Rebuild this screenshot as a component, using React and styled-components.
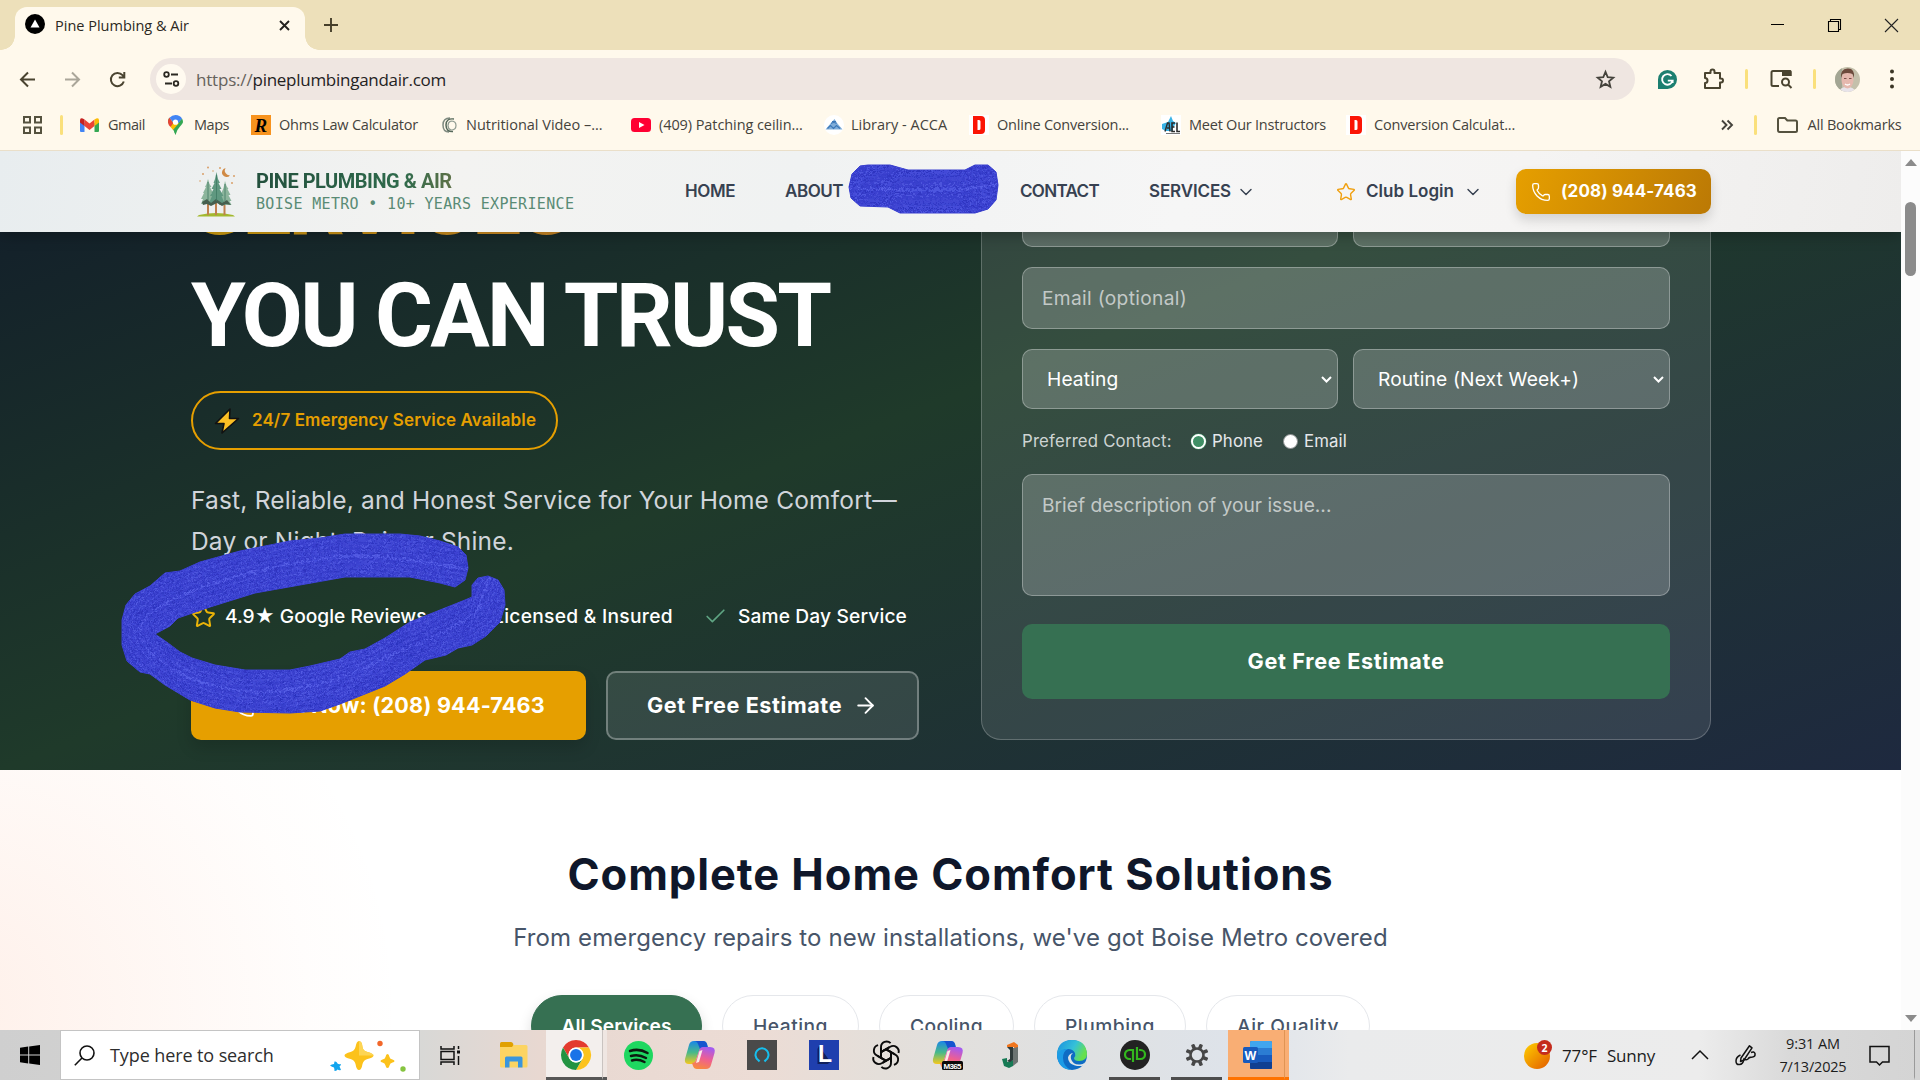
import React from "react";
import styled, { createGlobalStyle, css } from "styled-components";
import { Star, Check, Phone, ArrowRight, ChevronDown } from "lucide-react";

const ui = '"Open Sans", "Noto Sans", sans-serif';
const web = 'Inter, "Liberation Sans", sans-serif';
const display = 'Roboto, "Liberation Sans", sans-serif';
const mono = '"DejaVu Sans Mono", "Liberation Mono", monospace';

const GlobalStyle = createGlobalStyle`
  * { box-sizing: border-box; }
  body { margin: 0; background: #fff; font-family: ${web}; overflow: hidden; }
  svg { display: block; flex: none; overflow: visible; }
`;

const Screen = styled.div`
  width: 1920px;
  height: 1080px;
  display: flex;
  flex-direction: column;
  overflow: hidden;
  position: relative;
`;

const Text = styled.span`
  flex: none;
  white-space: nowrap;
  width: ${(p) => (p.$w ? `${p.$w}px` : "auto")};
  margin-left: ${(p) => p.$ml || 0}px;
  letter-spacing: ${(p) => p.$t || 0}px;
`;

/* ---------- browser chrome ---------- */

const TabStrip = styled.div`
  height: 50px;
  flex: none;
  display: flex;
  align-items: flex-end;
  background: #ede0ba;
  font-family: ${ui};
`;

const Tab = styled.div`
  position: relative;
  width: 290px;
  height: 43px;
  margin-left: 15px;
  padding: 0 15px 7px 10px;
  display: flex;
  align-items: center;
  background: #fff9ec;
  border-radius: 12px 12px 0 0;
  font-size: 14.5px;
  color: #2b2822;
  &::before,
  &::after {
    content: "";
    position: absolute;
    bottom: 0;
    width: 14px;
    height: 14px;
  }
  &::before {
    left: -14px;
    background: radial-gradient(circle at 0 0, transparent 13.5px, #fff9ec 14px);
  }
  &::after {
    right: -14px;
    background: radial-gradient(circle at 100% 0, transparent 13.5px, #fff9ec 14px);
  }
`;

const Favicon = styled.svg`
  margin-top: -2px;
`;

const Spacer = styled.div`
  flex: 1;
`;

const NewTab = styled.div`
  height: 50px;
  padding-left: 19px;
  display: flex;
  align-items: center;
`;

const WindowControls = styled.div`
  height: 50px;
  padding-right: 22px;
  display: flex;
  align-items: center;
  gap: 44px;
`;

const Toolbar = styled.div`
  height: 58px;
  flex: none;
  display: flex;
  align-items: center;
  background: #fff9ec;
  font-family: ${ui};
`;

const NavButtons = styled.div`
  width: 150px;
  padding-left: 19px;
  display: flex;
  align-items: center;
  gap: 28px;
`;

const Omnibox = styled.div`
  width: 1485px;
  height: 42px;
  padding: 0 20px 0 6px;
  display: flex;
  align-items: center;
  border-radius: 21px;
  background: #efe6e1;
  font-size: 17px;
  color: #24221f;
`;

const SiteInfo = styled.div`
  width: 30px;
  height: 30px;
  border-radius: 50%;
  display: grid;
  place-items: center;
  background: #fffaf0;
`;

const Scheme = styled(Text)`
  color: #66625c;
`;

const ToolbarActions = styled.div`
  flex: 1;
  padding-left: 23px;
  display: flex;
  align-items: center;
`;

const Divider = styled.i`
  width: 3px;
  height: 20px;
  border-radius: 2px;
  background: #fae07c;
  flex: none;
  margin-left: ${(p) => p.$ml || 0}px;
`;

const Slot = styled.span`
  display: flex;
  flex: none;
  align-items: center;
  margin-left: ${(p) => p.$ml || 0}px;
`;

const BookmarkBar = styled.div`
  height: 43px;
  flex: none;
  padding: 0 18px 8px 23px;
  display: flex;
  align-items: center;
  background: #fff9ec;
  border-bottom: 1px solid #eadfc9;
  font-family: ${ui};
  font-size: 14.5px;
  color: #45433c;
  ${Text} {
    padding-bottom: 2px;
  }
`;

const Bookmark = styled.div`
  display: flex;
  align-items: center;
  gap: ${(p) => p.$gap}px;
  width: ${(p) => p.$w}px;
  flex: none;
`;

/* ---------- web page ---------- */

const Viewport = styled.div`
  height: 879px;
  flex: none;
  display: flex;
`;

const Page = styled.div`
  width: 1901px;
  overflow: hidden;
`;

const SiteHeader = styled.header`
  position: relative;
  z-index: 1;
  height: 81px;
  padding-left: 196px;
  display: flex;
  align-items: center;
  background: linear-gradient(100deg, #e8edef 0%, #f3f3f1 24%, #f0f2f2 42%, #f6f6f6 62%, #f5f4f3 80%, #eeedec 100%);
  box-shadow: 0 3px 14px rgba(0, 0, 0, 0.28);
  color: #374151;
  font-size: 17px;
  font-weight: 600;
  & > ${Text} {
    padding-bottom: 1px;
  }
`;

const Brand = styled.div`
  width: 489px;
  display: flex;
  gap: 20px;
`;

const BrandText = styled.div`
  display: flex;
  flex-direction: column;
  align-items: flex-start;
  padding-top: 3px;
`;

const BrandName = styled(Text)`
  font: 700 20px/24px ${display};
  background: linear-gradient(90deg, #23503d, #2f6b4c 75%, #5d7148);
  background-clip: text;
  color: transparent;
`;

const BrandTag = styled(Text)`
  font: 400 15px/20px ${mono};
  color: #598b75;
  margin-top: 1px;
`;

const PhoneButton = styled.div`
  width: 195px;
  height: 45px;
  margin-left: 33px;
  padding-left: 15px;
  display: flex;
  align-items: center;
  gap: 10px;
  border-radius: 10px;
  background: linear-gradient(110deg, #e69f00, #bb7905);
  box-shadow: 0 6px 12px rgba(0, 0, 0, 0.14);
  color: #fff;
  font-weight: 700;
  ${Text} {
    padding-bottom: 1px;
  }
`;

const Hero = styled.section`
  height: 538px;
  padding-left: 191px;
  display: grid;
  grid-template-columns: 790px 730px;
  overflow: hidden;
  background: linear-gradient(to bottom right, #0f172a, #1f3a2a 50%, #1e293f) bottom / 100% 745px no-repeat;
  color: #fff;
`;

const Pitch = styled.div`
  display: flex;
  flex-direction: column;
  align-items: flex-start;
`;

const Headline = styled.h1`
  margin: -84px 0 0;
  display: flex;
  flex-direction: column;
  font: 700 88.5px/112px ${display};
`;

const HeadlineAccent = styled(Text)`
  background: linear-gradient(90deg, #dba70f, #c8763a);
  background-clip: text;
  color: transparent;
`;

const EmergencyBadge = styled.div`
  width: 367px;
  height: 59px;
  margin-top: 19px;
  padding-left: 21px;
  display: flex;
  align-items: center;
  gap: 12px;
  border: 2px solid #e69f00;
  border-radius: 30px;
  color: #e69f00;
  font-size: 17px;
  font-weight: 600;
  ${Text} {
    padding-bottom: 1px;
  }
`;

const Lead = styled.p`
  margin: 30px 0 0;
  display: flex;
  flex-direction: column;
  font-size: 24.5px;
  line-height: 41px;
  color: #d1d5db;
`;

const Features = styled.div`
  height: 30px;
  margin-top: 39px;
  display: flex;
  align-items: center;
  font-size: 19.2px;
  font-weight: 500;
`;

const Actions = styled.div`
  margin-top: 40px;
  display: flex;
  gap: 20px;
`;

const ActionButton = styled.div`
  width: ${(p) => p.$w}px;
  height: 69px;
  padding-left: 39px;
  display: flex;
  align-items: center;
  border-radius: 10px;
  font-size: 21.6px;
  font-weight: 700;
  ${Text} {
    padding-bottom: 2px;
  }
  ${(p) =>
    p.$primary
      ? css`
          gap: 10px;
          background: #e69f00;
          box-shadow: 0 8px 16px rgba(0, 0, 0, 0.14);
        `
      : css`
          gap: 11px;
          background: rgba(255, 255, 255, 0.1);
          border: 2px solid rgba(255, 255, 255, 0.3);
        `}
`;

const EstimateCard = styled.div`
  height: 568px;
  margin-top: -60px;
  padding: 12px 40px 40px;
  display: flex;
  flex-direction: column;
  border: 1px solid rgba(255, 255, 255, 0.22);
  border-radius: 20px;
  background: rgba(255, 255, 255, 0.1);
  font-size: 19.2px;
`;

const FieldRow = styled.div`
  display: grid;
  grid-template-columns: 316px 317px;
  gap: 15px;
  margin-bottom: 20px;
`;

const Field = styled.div`
  height: ${(p) => p.$h || 62}px;
  padding: ${(p) => p.$pad || "0 19px"};
  margin-bottom: ${(p) => p.$mb || 0}px;
  display: flex;
  align-items: ${(p) => (p.$top ? "flex-start" : "center")};
  justify-content: space-between;
  border: 1px solid rgba(255, 255, 255, 0.3);
  border-radius: 10px;
  background: rgba(255, 255, 255, 0.2);
  color: ${(p) => (p.$muted ? "#c3c9c7" : "#fff")};
`;

const ContactRow = styled.div`
  height: 25px;
  margin-bottom: 20px;
  display: flex;
  align-items: center;
  font-size: 16.8px;
  color: #e5e7eb;
  ${Text} {
    padding-bottom: 2px;
  }
`;

const ContactLabel = styled(Text)`
  color: #ced4d3;
`;

const Radio = styled.i`
  width: 15px;
  height: 15px;
  flex: none;
  margin-left: ${(p) => p.$ml}px;
  border-radius: 50%;
  ${(p) =>
    p.$on
      ? css`
          background: #3f8f65;
          border: 2px solid #fff;
          box-shadow: inset 0 0 0 0.5px #3f8f65, 0 0 0 0.5px #3f8f65;
        `
      : css`
          background: #fff;
          border: 1px solid #8a8f8f;
        `}
`;

const SubmitButton = styled.div`
  height: 75px;
  display: grid;
  place-items: center;
  border-radius: 10px;
  background: #367052;
  font-size: 21.6px;
  font-weight: 700;
  ${Text} {
    padding-bottom: 2px;
  }
`;

const Services = styled.section`
  height: 260px;
  padding-top: 77px;
  display: flex;
  flex-direction: column;
  align-items: center;
  overflow: hidden;
  background: radial-gradient(circle 440px at -40px 240px, rgba(250, 140, 90, 0.13), rgba(250, 145, 95, 0.09) 30%, rgba(250, 160, 110, 0.02) 80%, rgba(250, 160, 110, 0) 100%), #fff;
`;

const SectionTitle = styled.h2`
  margin: 0;
  font-size: 43.5px;
  line-height: 54px;
  font-weight: 700;
  color: #0f172a;
`;

const SectionLead = styled.p`
  margin: 19px 0 39px;
  font-size: 24px;
  line-height: 36px;
  color: #475569;
`;

const Pills = styled.div`
  display: flex;
  gap: 20px;
`;

const Pill = styled.div`
  width: ${(p) => p.$w}px;
  height: 62px;
  flex: none;
  display: grid;
  place-items: center;
  border-radius: 31px;
  font-size: 19.2px;
  font-weight: 500;
  color: #475569;
  background: #fff;
  border: 1px solid #e5e7eb;
  ${(p) =>
    p.$active &&
    css`
      background: #367052;
      border-color: #367052;
      color: #fff;
      font-weight: 600;
      box-shadow: 0 6px 14px rgba(0, 0, 0, 0.14);
    `}
`;

const Scrollbar = styled.div`
  width: 19px;
  padding: 8px 0 8px;
  display: flex;
  flex-direction: column;
  align-items: center;
  background: #fcfcfc;
`;

const Arrow = styled.i`
  width: 0;
  height: 0;
  border: 6.5px solid transparent;
  ${(p) =>
    p.$down
      ? "border-top: 7px solid #8b8b8b; border-bottom: 0;"
      : "border-bottom: 7px solid #8b8b8b; border-top: 0;"}
`;

const Thumb = styled.div`
  width: 11px;
  height: 74px;
  margin: 36px 0 auto;
  border-radius: 6px;
  background: #8b8b8b;
`;

/* ---------- taskbar ---------- */

const Taskbar = styled.div`
  height: 50px;
  flex: none;
  display: flex;
  align-items: center;
  font-family: ${ui};
  color: #1c1c1c;
  background: linear-gradient(90deg, #cfcfcf 0, #d8d8d6 420px, #e8d8d1 540px, #ecdcd5 760px, #e4dfda 880px, #dfe1e2 1080px, #dee3ea 1240px, #eaebec 1350px, #ececec 1700px, #d9d9d9 1790px, #d4d4d4 1920px);
`;

const SearchBox = styled.div`
  width: 360px;
  height: 50px;
  margin-left: 20px;
  padding-left: 13px;
  display: flex;
  align-items: center;
  background: #fff;
  border: 1px solid #c4c4c4;
  font-size: 18px;
  color: #2d2d2d;
`;

const AppTile = styled.div`
  width: ${(p) => p.$w || 61}px;
  height: 50px;
  flex: none;
  display: grid;
  place-items: center;
  margin-left: ${(p) => p.$ml || 0}px;
  background: ${(p) => p.$bg || "transparent"};
  border-bottom: 3px solid ${(p) => p.$line || "transparent"};
  border-right: ${(p) => (p.$edge ? `1px solid ${p.$edge}` : "0")};
  padding: 3px 0 0 ${(p) => p.$pl || 0}px;
`;

const Clock = styled.div`
  width: 68px;
  margin-left: 23px;
  display: flex;
  flex-direction: column;
  align-items: center;
  font-size: 14.5px;
  line-height: 23px;
`;

const Weather = styled.div`
  display: flex;
  align-items: center;
  font-size: 17px;
`;

const Ink = styled.svg`
  position: absolute;
  left: 0;
  top: 0;
  z-index: 5;
  pointer-events: none;
`;

/* ---------- drawings ---------- */

const Svg = ({ w, h = w, vb, children, ...rest }) => (
  <svg width={w} height={h} viewBox={vb || `0 0 ${w} ${h}`} fill="none" {...rest}>
    {children}
  </svg>
);

const SelectArrow = () => (
  <Svg w={11} h={7}>
    <path d="M1 1l4.5 4.5L10 1" stroke="#fff" strokeWidth="2" />
  </Svg>
);

const DLogo = () => (
  <Svg w={20}>
    <rect width="20" height="20" fill="#fff" />
    <path fillRule="evenodd" d="M4 1h8q4 0 4 4v10q0 4-4 4H4zM8.500 5v10h1.500q1.500 0 1.500-1.500v-7Q11.500 5 10 5z" fill="#fb1505" />
  </Svg>
);

const PineLogo = () => (
  <Svg w={40} h={51}>
    <path d="M3 49q17-4 34 0l2 1.500H1z" fill="#a3b92f" />
    <path d="M12 35v14M20 34v15M28.500 36v13" stroke="#c0814e" strokeWidth="2" />
    <g fill="#8cb59c">
      <path d="M12 13l1.500 5 2 3-1.500 0 3 6-2 0 3 6-2 0 2 5H5l2-5H5l3-6H7l3-6H9l1.500-3z" />
      <path d="M29 15l1.500 5 2 3-1 0 3 6-2 0 3 6-2 0 2 4H23l1-5-1 0 3-6-1 0 2.500-6z" />
    </g>
    <path d="M20.500 6l1.500 7 2 4-1.500 0 3 6-2 0 4 7-2 0 3 7H13l3-7-2 0 3.500-7-2 0 3-6-1 0 1.500-4z" fill="#5f9880" />
    <path d="M6 36l5-3 4 4 5-4 6 4 5-3 4 5-5-1-4 2-5-3-6 3-4-2-4 1z" fill="#46604f" />
    <path d="M20.500 9v26M12 16v18M29 18v17" stroke="#3f7a63" strokeWidth=".8" />
    <path d="M29.500 2a4.600 4.600 0 1 0 4.500 7.500 5 5 0 0 1-4.500-7.500" fill="#d08a45" />
    <g fill="#d9a06a">
      <circle cx="12" cy="1.500" r="1" />
      <circle cx="24" cy="2" r="1" />
      <circle cx="7" cy="8" r="1" />
      <circle cx="17" cy="5" r=".8" />
      <circle cx="38" cy="10" r="1" />
      <circle cx="4" cy="15" r=".8" />
      <circle cx="36" cy="17" r="1" />
    </g>
  </Svg>
);

const Copilot = ({ badge }) => (
  <Svg w={30}>
    <defs>
      <linearGradient id="cpA" x1="0" y1="0" x2="0" y2="1">
        <stop offset="0" stopColor="#1a86e8" />
        <stop offset=".5" stopColor="#48b98a" />
        <stop offset="1" stopColor="#f6c81c" />
      </linearGradient>
      <linearGradient id="cpB" x1=".6" y1="0" x2=".3" y2="1">
        <stop offset="0" stopColor="#a45bf0" />
        <stop offset=".5" stopColor="#ee5f92" />
        <stop offset="1" stopColor="#f98a3c" />
      </linearGradient>
    </defs>
    <path d="M9 1h9q3 0 4 3l1 4h-5q-3 0-4 3l-3 9q-1 4-4 4H4q-5 0-4-5L4 5q1-4 5-4" fill="url(#cpA)" />
    <path d="M9 1h9q3 0 4 3l1 4h-5l-3 1-2-5q-1-3-4-3" fill="#1554cf" />
    <path d="M21 29h-9q-3 0-4-3l-1-3q3 0 4-3l3-9q1-4 4-4h7q6 0 4.500 6L26 25q-1 4-5 4" fill="url(#cpB)" />
    <path d="M14.500 11l3-1-3.500 12-3 1z" fill="#fbe9e6" />
    {badge && (
      <>
        <rect x="9" y="21" width="21" height="9" rx="1.500" fill="#0a0a0a" />
        <text x="10.500" y="28.500" fontFamily="Liberation Sans" fontWeight="700" fontSize="8" fill="#fff" textLength="18">
          M365
        </text>
      </>
    )}
  </Svg>
);

const Chrome = () => (
  <Svg w={30} vb="0 0 48 48">
    <circle cx="24" cy="24" r="24" fill="#fff" />
    <path d="M24 12h20.800A24 24 0 0 0 3.220 12l10.390 18A12 12 0 0 1 24 12" fill="#e33b2e" />
    <path d="M34.390 30L24 48A24 24 0 0 0 44.800 12H24a12 12 0 0 1 10.390 18" fill="#fcc31e" />
    <path d="M13.610 30L3.220 12A24 24 0 0 0 24 48l10.390-18a12 12 0 0 1-20.780 0" fill="#229342" />
    <circle cx="24" cy="24" r="12" fill="#fff" />
    <circle cx="24" cy="24" r="9.500" fill="#1a73e8" />
  </Svg>
);

const SCRIBBLE_A =
  "M849 187L852 174L860 166L868 165H890L908 170H965L975 165H988L996 172L998 185L996 200L988 209L975 213H900L888 207L860 206L851 198Z";
const SCRIBBLE_B =
  "M345 534H400L420 536L440 541L458 547L466 555L468 568L465 580L455 587L440 583L425 580L410 577H345L300 585L255 593L210 607L178 618L170 626L155 634L168 643L180 652L192 658L215 665L245 670H290L310 666L340 659L350 652L365 649L385 638L410 622L440 610L465 600L472 597V585L478 578L488 576L498 580L504 590L505 605L500 622L486 636L472 645L458 648L446 655L425 660L405 674L385 686L340 704L320 711L290 713L240 712L215 708L190 700L165 685L150 674L140 672L127 661L122 645L122 620L126 605L135 594L150 586L165 573L180 571L200 562L240 551L290 541L320 538Z";
const STROKE_A = "M840 188L905 190L960 190L1010 182";
const STROKE_B =
  "M490 574Q400 555 345 556Q260 565 190 592Q138 612 140 634Q143 652 178 672Q210 690 260 692Q330 690 390 655Q450 632 477 612L492 570";

const INK = ["#3b41d0", "#2b31bb", "#474fdd", "#373dcb", "#575fe6", "#3036c2", "#4148d6"];
const WIDTHS = Array.from({ length: 40 }, (_, i) => 60 - i * 1.5);

const Streaks = ({ d, clip }) => (
  <g clipPath={`url(#${clip})`}>
    <g fill="none" filter="url(#rough)">
      {WIDTHS.map((w, i) => (
        <path key={w} d={d} strokeWidth={w} stroke={INK[i % INK.length]} strokeLinejoin="round" />
      ))}
    </g>
  </g>
);

const Scribbles = () => (
  <Ink width="1920" height="1080" viewBox="0 0 1920 1080">
    <defs>
      <clipPath id="inkA"><path d={SCRIBBLE_A} /></clipPath>
      <clipPath id="inkB"><path d={SCRIBBLE_B} /></clipPath>
      <filter id="rough" filterUnits="userSpaceOnUse" x="80" y="140" width="960" height="600">
        <feTurbulence type="fractalNoise" baseFrequency="0.3" numOctaves="3" seed="4" result="n" />
        <feDisplacementMap in="SourceGraphic" in2="n" scale="9" xChannelSelector="R" yChannelSelector="G" />
      </filter>
    </defs>
    <path d={SCRIBBLE_A} fill="#3a40cf" stroke="#3a40cf" strokeLinejoin="round" />
    <Streaks d={STROKE_A} clip="inkA" />
    <path d={SCRIBBLE_B} fill="#3a40cf" stroke="#3a40cf" strokeLinejoin="round" />
    <Streaks d={STROKE_B} clip="inkB" />
  </Ink>
);

/* ---------- sections ---------- */

const BrowserTop = () => (
  <>
    <TabStrip>
      <Tab>
        <Favicon width="20" height="20" viewBox="0 0 20 20">
          <circle cx="10" cy="10" r="10" fill="#000" />
          <path d="M10 5.500L14.500 13.500h-9z" fill="#fff" />
        </Favicon>
        <Text $ml={10} $w={134}>Pine Plumbing &amp; Air</Text>
        <Spacer />
        <Svg w={11}>
          <path d="M1 1l9 9M10 1l-9 9" stroke="#24221f" strokeWidth="1.900" />
        </Svg>
      </Tab>
      <NewTab>
        <Svg w={14}>
          <path d="M7 0v14M0 7h14" stroke="#463f2a" strokeWidth="1.900" />
        </Svg>
      </NewTab>
      <Spacer />
      <WindowControls>
        <Svg w={13}><path d="M0 5.500h13" stroke="#000" /></Svg>
        <Svg w={13}><path d="M.5 2.500h10v10h-10zM2.500 2.500v-2h10v10h-2" stroke="#000" strokeWidth="1.100" /></Svg>
        <Svg w={13}><path d="M0 0l13 13M13 0L0 13" stroke="#222" strokeWidth="1.100" /></Svg>
      </WindowControls>
    </TabStrip>

    <Toolbar>
      <NavButtons>
        <Svg w={17}><path d="M16 8.500H2M9 1.500l-7 7 7 7" stroke="#4a4430" strokeWidth="2" /></Svg>
        <Svg w={17}><path d="M1 8.500h14M8 1.500l7 7-7 7" stroke="#aaa699" strokeWidth="2" /></Svg>
        <Svg w={17}>
          <path d="M14.800 10.500A6.600 6.600 0 1 1 13.500 4.200L15 5.800M15.300 1v5.500H9.800" stroke="#4a4430" strokeWidth="2" />
        </Svg>
      </NavButtons>
      <Omnibox>
        <SiteInfo>
          <Svg w={17} h={16}>
            <path d="M8 3.500h7M2 12.500h7" stroke="#2b2822" strokeWidth="2" />
            <circle cx="3.500" cy="3.500" r="2.300" stroke="#2b2822" strokeWidth="1.800" />
            <circle cx="13" cy="12.500" r="2.300" stroke="#2b2822" strokeWidth="1.800" />
          </Svg>
        </SiteInfo>
        <Scheme $ml={10} $w={56.5} $t={-0.19}>https://</Scheme>
        <Text $t={-0.27}>pineplumbingandair.com</Text>
        <Spacer />
        <Svg w={19} vb="0 0 20 20">
          <path d="M10 2l2.300 5.500 5.900.5-4.500 3.900 1.400 5.800L10 14.600l-5.100 3.100 1.400-5.800L1.800 8l5.900-.5z" stroke="#45433c" strokeWidth="1.900" />
        </Svg>
      </Omnibox>
      <ToolbarActions>
        <Svg w={19}>
          <path d="M9.500 0a9.500 9.500 0 1 1 0 19H0V9.500A9.500 9.500 0 0 1 9.500 0" fill="#1c7f70" />
          <path d="M13.500 6A5.300 5.300 0 1 0 14.600 10.600H9.800M14.600 10.600V13" stroke="#fff" strokeWidth="1.900" />
        </Svg>
        <Slot $ml={26}>
          <Svg w={22}>
            <path d="M2 5h5.500V3.500a2 2 0 0 1 4 0V5H17v5.500h1a2 2 0 0 1 0 4h-1V20H2v-5a2.500 2.500 0 0 0 0-5z" stroke="#4a4430" strokeWidth="2" strokeLinejoin="round" />
          </Svg>
        </Slot>
        <Divider $ml={20} />
        <Slot $ml={22}>
          <Svg w={22} h={20}>
            <path d="M9 17H3q-1.500 0-1.500-1.500v-12Q1.500 2 3 2h16.500q1 0 1 1v4" stroke="#4a4430" strokeWidth="2" />
            <path d="M12 1h8q1.500 0 1.500 1.500V7H12z" fill="#4a4430" />
            <circle cx="15.500" cy="13" r="3.500" stroke="#4a4430" strokeWidth="2" />
            <path d="M18 15.500l3.500 3.500" stroke="#4a4430" strokeWidth="2" />
          </Svg>
        </Slot>
        <Divider $ml={21} />
        <Slot $ml={19}>
          <Svg w={25}>
            <clipPath id="face"><circle cx="12.500" cy="12.500" r="12.500" /></clipPath>
            <g clipPath="url(#face)">
              <rect width="25" height="25" fill="#c4c0ab" />
              <rect width="7" height="25" fill="#a3a694" />
              <path d="M4 25q1-5 8-5t9 5" fill="#e8e4ea" />
              <ellipse cx="12.500" cy="13" rx="6" ry="8.500" fill="#e5b8ae" />
              <path d="M6 11q-1-9 6.500-9.500T19 11l-1.500-4q-5-2-10 0z" fill="#6d4a3c" />
              <path d="M9 11.500h2.500M14 11.500h2.500" stroke="#7c5048" strokeWidth="1.200" />
              <path d="M10 17q2.500 2 5 0" stroke="#fff" strokeWidth="1.300" />
            </g>
          </Svg>
        </Slot>
        <Slot $ml={30}>
          <Svg w={4} h={20}>
            <g fill="#3b3625">
              <circle cx="2" cy="2.500" r="2" />
              <circle cx="2" cy="10" r="2" />
              <circle cx="2" cy="17.500" r="2" />
            </g>
          </Svg>
        </Slot>
      </ToolbarActions>
    </Toolbar>

    <BookmarkBar>
      <Svg w={19} h={18}>
        <path d="M1 1h6v5.500H1zM12 1h6v5.500h-6zM1 11.500h6V17H1zM12 11.500h6V17h-6z" stroke="#55523f" strokeWidth="2" />
      </Svg>
      <Divider $ml={18} />
      <Slot $ml={17}>
        <Bookmark $gap={9} $w={88}>
          <Svg w={19} h={14}>
            <path d="M0 2v11q0 1 1 1h3.500V5z" fill="#4285f4" />
            <path d="M19 2v11q0 1-1 1h-3.500V5z" fill="#34a853" />
            <path d="M4.500 8V1.500l5 4 5-4V8l-5 4z" fill="#ea4335" />
            <path d="M14.500 8V1.500Q19-1.500 19 2.500v2z" fill="#fbbc04" />
            <path d="M4.500 8V1.500Q0-1.500 0 2.500v2z" fill="#c5221f" />
          </Svg>
          <Text $t={-0.47}>Gmail</Text>
        </Bookmark>
        <Bookmark $gap={11} $w={83}>
          <Svg w={15} h={20}>
            <path d="M7.500 20Q6.500 15 3 11.500 0 8 0 7q0-2 1-4l5 5z" fill="#34a853" />
            <path d="M7.500 20q1-5 4.500-8.500Q15 8 15 7q0-2-1-3.500L4.500 13.500Q6.500 16 7.500 20" fill="#34a853" />
            <path d="M0 7q0 2.500 2.500 5l3-3.500-4-6Q0 4.500 0 7" fill="#ea4335" />
            <path d="M2.500 12q1.500 1.500 2.500 3l6-7-5-1z" fill="#fbbc04" />
            <path d="M1.500 2.700Q4 0 7.500 0 12 0 14 3.500L10.500 8 5 7z" fill="#4285f4" />
            <circle cx="7.500" cy="7.200" r="2.600" fill="#fff" />
          </Svg>
          <Text $t={-0.47}>Maps</Text>
        </Bookmark>
        <Bookmark $gap={8} $w={191}>
          <Svg w={20}>
            <rect width="20" height="20" fill="#f7931e" />
            <text x="3.500" y="16.500" fontFamily="Liberation Serif" fontStyle="italic" fontWeight="700" fontSize="19" fill="#000">R</text>
          </Svg>
          <Text $t={-0.22}>Ohms Law Calculator</Text>
        </Bookmark>
        <Bookmark $gap={9} $w={189}>
          <Svg w={15} h={16}>
            <path d="M8 1Q1 1 1 8t6 7" stroke="#7f8a80" strokeWidth="1.500" />
            <path d="M12 2Q4 1 4 8t7 6.500" stroke="#55685a" strokeWidth="1.500" />
            <path d="M9 4q5 0 5 4.500T9 13Q6 12 6 8.500T9 4" stroke="#8e9a90" strokeWidth="1.200" />
          </Svg>
          <Text $t={-0.02}>Nutritional Video –...</Text>
        </Bookmark>
        <Bookmark $gap={8} $w={193}>
          <Svg w={20} h={14}>
            <rect width="20" height="14" rx="3.500" fill="#ff0033" />
            <path d="M8 4v6l5.500-3z" fill="#fff" />
          </Svg>
          <Text $t={-0.08}>(409) Patching ceilin...</Text>
        </Bookmark>
        <Bookmark $gap={7} $w={145}>
          <Svg w={20}>
            <circle cx="10" cy="10" r="10" fill="#fff" />
            <path d="M10.500 4l2.500 4 5.500 6.500H1.500L7 8z" fill="#7fadd9" />
            <path d="M3.500 13.500l3-3 3 3 3-3 3.500 3M7 8.500q3-2 5.500 0M8 6.500h4" stroke="#3c78b8" strokeWidth="1.200" />
          </Svg>
          <Text>Library - ACCA</Text>
        </Bookmark>
        <Bookmark $gap={8} $w={192}>
          <DLogo />
          <Text $t={-0.2}>Online Conversion...</Text>
        </Bookmark>
        <Bookmark $gap={8} $w={185}>
          <Svg w={20}>
            <rect width="20" height="20" fill="#fff" />
            <path d="M10 1l2 5 3 2-3 5v3H5l-4-2V9l6-2z" fill="#39b3e6" />
            <path d="M4 16.500L6.500 8H8l1 8.500M6 13h3" stroke="#2b2b2b" strokeWidth="1.400" />
            <path d="M14 8h-3v8.500h3M11 12h2.500M16 7.500v9h3" stroke="#2b2b2b" strokeWidth="1.600" />
            <path d="M5 18.500h14" stroke="#777" />
          </Svg>
          <Text $t={-0.23}>Meet Our Instructors</Text>
        </Bookmark>
        <Bookmark $gap={8} $w={175}>
          <DLogo />
          <Text $t={-0.18}>Conversion Calculat...</Text>
        </Bookmark>
      </Slot>
      <Spacer />
      <Svg w={12} h={10}>
        <path d="M1 .5L5.500 5 1 9.500M6.500.5L11 5 6.500 9.500" stroke="#45433c" strokeWidth="1.900" />
      </Svg>
      <Divider $ml={21} />
      <Slot $ml={20}>
        <Svg w={21} h={16}>
          <path d="M1 13V2.500Q1 1 2.500 1H8l2.300 2.500h8.200Q20 3.500 20 5v8.500q0 1.500-1.500 1.500h-16Q1 15 1 13z" stroke="#55523f" strokeWidth="2" />
        </Svg>
        <Text $ml={10} $t={-0.2} $w={94.500}>All Bookmarks</Text>
      </Slot>
    </BookmarkBar>
  </>
);

const Header = () => (
  <SiteHeader>
    <Brand>
      <PineLogo />
      <BrandText>
        <BrandName $t={-0.48}>PINE PLUMBING &amp; AIR</BrandName>
        <BrandTag $t={0.33}>BOISE METRO • 10+ YEARS EXPERIENCE</BrandTag>
      </BrandText>
    </Brand>
    <Text $w={50} $t={-0.43}>HOME</Text>
    <Text $ml={50} $w={59} $t={-0.47}>ABOUT</Text>
    <Text $ml={176} $w={79} $t={-0.67}>CONTACT</Text>
    <Text $ml={50} $w={82} $t={-0.13}>SERVICES</Text>
    <Slot $ml={5}><ChevronDown size={20} strokeWidth={1.7} /></Slot>
    <Slot $ml={80}><Star size={20} strokeWidth={1.7} color="#f0a010" /></Slot>
    <Text $ml={10} $w={88} $t={0.03}>Club Login</Text>
    <Slot $ml={9}><ChevronDown size={20} strokeWidth={1.7} /></Slot>
    <PhoneButton>
      <Phone size={20} strokeWidth={1.6} />
      <Text $t={0.14}>(208) 944-7463</Text>
    </PhoneButton>
  </SiteHeader>
);

const HeroSection = () => (
  <Hero>
    <Pitch>
      <Headline>
        <HeadlineAccent $t={-3.5}>SERVICES</HeadlineAccent>
        <Text $t={-2.7}>YOU CAN TRUST</Text>
      </Headline>
      <EmergencyBadge>
        <Svg w={26} h={26}>
          <path d="M16 1L1.500 15.500h8.500L8 25 24.500 10.500h-9z" fill="#fbbf24" stroke="#111" strokeWidth="1.600" strokeLinejoin="round" />
        </Svg>
        <Text $t={0.11}>24/7 Emergency Service Available</Text>
      </EmergencyBadge>
      <Lead>
        <Text $t={0.19}>Fast, Reliable, and Honest Service for Your Home Comfort—</Text>
        <Text $t={0.18}>Day or Night, Rain or Shine.</Text>
      </Lead>
      <Features>
        <Star size={25} strokeWidth={1.9} color="#eab308" />
        <Text $ml={9} $w={201}>4.9★ Google Reviews</Text>
        <Slot $ml={27}><Check size={25} strokeWidth={1.6} color="#5fa583" /></Slot>
        <Text $ml={15} $w={180} $t={0.29}>Licensed &amp; Insured</Text>
        <Slot $ml={30}><Check size={25} strokeWidth={1.6} color="#5fa583" /></Slot>
        <Text $ml={10} $w={169} $t={0.13}>Same Day Service</Text>
      </Features>
      <Actions>
        <ActionButton $w={395} $primary>
          <Phone size={25} strokeWidth={1.7} />
          <Text $t={0.18}>Call Now: (208) 944-7463</Text>
        </ActionButton>
        <ActionButton $w={313}>
          <Text $t={0.58}>Get Free Estimate</Text>
          <ArrowRight size={25} strokeWidth={1.8} />
        </ActionButton>
      </Actions>
    </Pitch>

    <EstimateCard>
      <FieldRow>
        <Field />
        <Field />
      </FieldRow>
      <Field $muted $mb={20}>
        <Text $t={0.31}>Email (optional)</Text>
      </Field>
      <FieldRow>
        <Field $h={60} $pad="0 5px 0 24px">
          <Text $t={0.12}>Heating</Text>
          <SelectArrow />
        </Field>
        <Field $h={60} $pad="0 5px 0 24px">
          <Text $t={0.15}>Routine (Next Week+)</Text>
          <SelectArrow />
        </Field>
      </FieldRow>
      <ContactRow>
        <ContactLabel $w={149} $t={0.17}>Preferred Contact:</ContactLabel>
        <Radio $on $ml={20} />
        <Text $ml={6} $w={51} $t={0.12}>Phone</Text>
        <Radio $ml={20} />
        <Text $ml={6} $t={0.13}>Email</Text>
      </ContactRow>
      <Field $h={122} $muted $top $pad="18px 19px" $mb={28}>
        <Text>Brief description of your issue...</Text>
      </Field>
      <SubmitButton>
        <Text $t={0.69}>Get Free Estimate</Text>
      </SubmitButton>
    </EstimateCard>
  </Hero>
);

const ServicesSection = () => (
  <Services>
    <SectionTitle><Text $t={0.95}>Complete Home Comfort Solutions</Text></SectionTitle>
    <SectionLead><Text $t={0.11}>From emergency repairs to new installations, we've got Boise Metro covered</Text></SectionLead>
    <Pills>
      <Pill $w={171} $active><Text>All Services</Text></Pill>
      <Pill $w={137}><Text $t={0.5}>Heating</Text></Pill>
      <Pill $w={135}><Text $t={0.38}>Cooling</Text></Pill>
      <Pill $w={152}><Text $t={0.52}>Plumbing</Text></Pill>
      <Pill $w={164}><Text $t={0.56}>Air Quality</Text></Pill>
    </Pills>
  </Services>
);

const WindowsTaskbar = () => (
  <Taskbar>
    <Slot $ml={20}>
      <Svg w={20}>
        <path d="M0 2.800l8.200-1.200v8H0zM9.200 1.500L20 0v9.600H9.200zM0 10.500h8.200v8L0 17.200zM9.200 10.500H20V20L9.200 18.600z" fill="#000" />
      </Svg>
    </Slot>
    <SearchBox>
      <Svg w={21}>
        <circle cx="13" cy="8" r="7" stroke="#111" strokeWidth="1.600" />
        <path d="M8 13L.8 20.200" stroke="#111" strokeWidth="1.600" />
      </Svg>
      <Text $ml={15} $w={163} $t={-0.1}>Type here to search</Text>
      <Slot $ml={57}>
        <Svg w={78} h={32}>
          <path d="M4.500 22.500q2-.5 3 2 1 1 3.500.500-.5 2-1.500 2.500 1 2 1.500 3.500-2 .5-3.500-.5-1 1.500-3 1.500 0-2-.5-3.500Q2 28 0 26.500q1.500-1.500 4-1.500z" fill="#12a5ee" />
          <path d="M29 2q3 0 3.500 6 .5 4 5 5 6 1.500 6 3.500t-6 3.500q-4 1-5 5-1 6-3.500 6t-3.500-6q-1-4-5-5-6-1.500-6-3.500t6-3.500q4-1 5-5Q26.500 2 29 2" fill="#fcc21b" />
          <path d="M29 2q3 0 3.500 6 .5 4 5 5 6 1.500 6 3.500H29z" fill="#fdd554" />
          <circle cx="50" cy="4.500" r="2.700" fill="#f2672a" />
          <path d="M57.500 15q1.500 0 2 3 .5 2 3 2.500 2 .5 2 1.500t-2 1.500q-2.500.5-3 3-.5 2.500-2 2.500t-2-2.500q-.5-2.500-3-3-2-.5-2-1.500t2-1.500q2.500-.5 3-2.500.5-3 2-3" fill="#fcc21b" />
          <circle cx="73" cy="30" r="2.700" fill="#86c440" />
        </Svg>
      </Slot>
    </SearchBox>
    <AppTile $w={60}>
      <Svg w={21}>
        <path d="M1 1v3h13V1M1 20v-3h13v3M1 6.500h13v8H1zM18.500 1v3M18.500 11v9" stroke="#111" strokeWidth="1.500" />
        <rect x="17" y="5.500" width="3" height="3" fill="#111" />
      </Svg>
    </AppTile>
    <AppTile $w={66} $pl={2}>
      <Svg w={28} h={26}>
        <path d="M0 1.500Q0 0 1.500 0H11q1.500 0 2 1.500L14 5H0z" fill="#e0a000" />
        <path d="M0 5h12l1.500-2H26q1.500 0 1.500 1.500V24q0 1.500-1.500 1.500H1.500Q0 25.500 0 24z" fill="#fcd462" />
        <path d="M5 25.500V16q0-1.500 1.500-1.500H21q1.500 0 1.500 1.500v9.500H18V19.500H9.500v6z" fill="#3a96dd" />
      </Svg>
    </AppTile>
    <AppTile $w={57} $pl={3} $bg="#f3efed" $line="#575757" $edge="#c9c3c0">
      <Chrome />
    </AppTile>
    <AppTile $w={4} $bg="#efe6e2" $line="#575757" />
    <AppTile $w={61} $ml={1}>
      <Svg w={29}>
        <circle cx="14.500" cy="14.500" r="14.500" fill="#1ed760" />
        <path d="M6 10q9-3 17.500 2M7 15q7.500-2.300 15 2M8 19.500q6-1.800 12.500 1.500" stroke="#0c1a10" strokeWidth="2.500" strokeLinecap="round" />
      </Svg>
    </AppTile>
    <AppTile $w={62}><Copilot /></AppTile>
    <AppTile $w={62}>
      <Svg w={30}>
        <rect width="30" height="30" fill="#4a4a4a" />
        <path d="M12.500 21.500l-1-1.200a6.500 6.500 0 1 1 7 0l-1 1.200" stroke="#16bfee" strokeWidth="2" />
      </Svg>
    </AppTile>
    <AppTile $w={62}>
      <Svg w={30}>
        <rect width="30" height="30" fill="#1f3fae" />
        <path d="M10 6l-1.500 3v15h10l3-2z" fill="#0f1f5c" />
        <text x="9" y="22" fontFamily="Liberation Sans" fontWeight="700" fontSize="23" fill="#fff">L</text>
      </Svg>
    </AppTile>
    <AppTile $w={62}>
      <Svg w={30}>
        {[0, 60, 120, 180, 240, 300].map((a) => (
          <path key={a} transform={`rotate(${a} 15 15)`} d="M10 17.800V7.200a5.600 5.600 0 0 1 9.600-4M10.200 12l4.800-2.800 8.500 4.900" stroke="#0b0b0b" strokeWidth="1.900" strokeLinejoin="round" />
        ))}
      </Svg>
    </AppTile>
    <AppTile $w={62}><Copilot badge /></AppTile>
    <AppTile $w={62}>
      <Svg w={17} h={26}>
        <path d="M5 3l7-3 4 3v5h-4V5H5z" fill="#f0761e" />
        <path d="M10 6h2l4-1v15l-5 4V8z" fill="#6c7472" />
        <path d="M0 17l5-1v4l6-2v6l-4 2-5-2z" fill="#177a55" />
        <path d="M5 5h6v13l-3 2-3-1 3-2V8z" fill="#2f3a3a" />
      </Svg>
    </AppTile>
    <AppTile $w={62}>
      <Svg w={30}>
        <defs>
          <linearGradient id="edgeA" x1="0" y1="0" x2="1" y2=".4">
            <stop offset="0" stopColor="#1b8fe0" />
            <stop offset=".6" stopColor="#35c1d8" />
            <stop offset="1" stopColor="#66e04e" />
          </linearGradient>
        </defs>
        <circle cx="15" cy="15" r="15" fill="#0f6cc4" />
        <path d="M0 14Q1 0 15 0t15 14q0 7-8 7-5 0-5-3 2-2 1-5-2-4-7-4-8 0-11 8z" fill="url(#edgeA)" />
        <path d="M16 13q-3 2-2 6 2 6 9 5.500 3 0 5-2l-1 3q-5 1-9 0-7-2-7-8 1-4 5-4.500" fill="#dfe5e8" />
        <path d="M0 15q3-7 11-6-5 2-5 9 0 8 8 12Q1 29 0 15" fill="#1c9be6" />
      </Svg>
    </AppTile>
    <AppTile $w={51} $ml={6} $line="#4d4d4d">
      <Svg w={30}>
        <circle cx="15" cy="15" r="15" fill="#222" />
        <g stroke="#33b81e" strokeWidth="2.200">
          <path d="M13 22V10H9.500a4.200 4.200 0 0 0 0 9H11M17 7v12h3.500a4.200 4.200 0 0 0 0-9H19" />
        </g>
      </Svg>
    </AppTile>
    <AppTile $w={51} $ml={11} $line="#4d4d4d">
      <Svg w={24}>
        <circle cx="12" cy="12" r="6.500" stroke="#474747" strokeWidth="2.600" />
        <g fill="#474747">
          {[22.5, 67.5, 112.5, 157.5, 202.5, 247.5, 292.5, 337.5].map((a) => (
            <rect key={a} x="10.200" y="0.500" width="3.600" height="5" rx=".8" transform={`rotate(${a} 12 12)`} />
          ))}
        </g>
      </Svg>
    </AppTile>
    <AppTile $w={57} $pl={3} $ml={6} $bg="#f9ae74" $line="#ff7200" $edge="#e09454">
      <Svg w={29} h={28}>
        <rect x="7" width="22" height="28" rx="1.500" fill="#185abd" />
        <path d="M7 1.500Q7 0 8.500 0h19Q29 0 29 1.500V7H7z" fill="#41a5ee" />
        <path d="M7 7h22v7H7z" fill="#2b7cd3" />
        <path d="M7 21h22v5.500q0 1.500-1.500 1.500h-19Q7 28 7 26.500z" fill="#103f91" />
        <rect y="6" width="15" height="16" rx="1.500" fill="#185abd" />
        <text x="1.500" y="18.500" fontFamily="Liberation Sans" fontWeight="700" fontSize="12.500" fill="#fff">W</text>
      </Svg>
    </AppTile>
    <AppTile $w={4} $bg="#f9ae74" $line="#ff7200" />
    <Spacer />
    <Weather>
      <Svg w={28} h={30}>
        <defs>
          <linearGradient id="sun" x1="0" y1="0" x2="1" y2="1">
            <stop offset="0" stopColor="#ffd000" />
            <stop offset="1" stopColor="#e25a00" />
          </linearGradient>
        </defs>
        <circle cx="13" cy="16" r="13" fill="url(#sun)" />
        <circle cx="20.500" cy="7.500" r="7.500" fill="#c42b1c" />
        <text x="17.600" y="11.500" fontFamily="Open Sans" fontWeight="700" fontSize="10.500" fill="#fff">2</text>
      </Svg>
      <Text $ml={10} $w={35} $t={-0.12}>77°F</Text>
      <Text $ml={10} $w={49} $t={-0.22}>Sunny</Text>
    </Weather>
    <Slot $ml={35}>
      <Svg w={18} h={10}><path d="M1 9l8-8 8 8" stroke="#111" strokeWidth="1.500" /></Svg>
    </Slot>
    <Slot $ml={26}>
      <Svg w={21}>
        <path d="M14.500.8l2.500 2L9 15l-3.500 1.500L6 13z" stroke="#111" strokeWidth="1.500" strokeLinejoin="round" />
        <path d="M5.500 10Q1 12 1 16t3.500 3.500Q8 19.500 9 14q2 1.500 4 0 1-2 4.500-2 3-.5 2.500-3.500-1-2.500-4-1" stroke="#111" strokeWidth="1.500" />
      </Svg>
    </Slot>
    <Clock>
      <Text $t={-0.1}>9:31 AM</Text>
      <Text $t={-0.19}>7/13/2025</Text>
    </Clock>
    <Slot $ml={22}>
      <Svg w={21}><path d="M1 1.500h19V17h-6.500l-3 3-3-3H1z" stroke="#111" strokeWidth="1.500" /></Svg>
    </Slot>
    <AppTile $w={25} $edge="#9a9a9a" />
    <AppTile $w={5} />
  </Taskbar>
);

export default function App() {
  return (
    <Screen>
      <GlobalStyle />
      <BrowserTop />
      <Viewport>
        <Page>
          <Header />
          <HeroSection />
          <ServicesSection />
        </Page>
        <Scrollbar>
          <Arrow />
          <Thumb />
          <Arrow $down />
        </Scrollbar>
      </Viewport>
      <WindowsTaskbar />
      <Scribbles />
    </Screen>
  );
}
